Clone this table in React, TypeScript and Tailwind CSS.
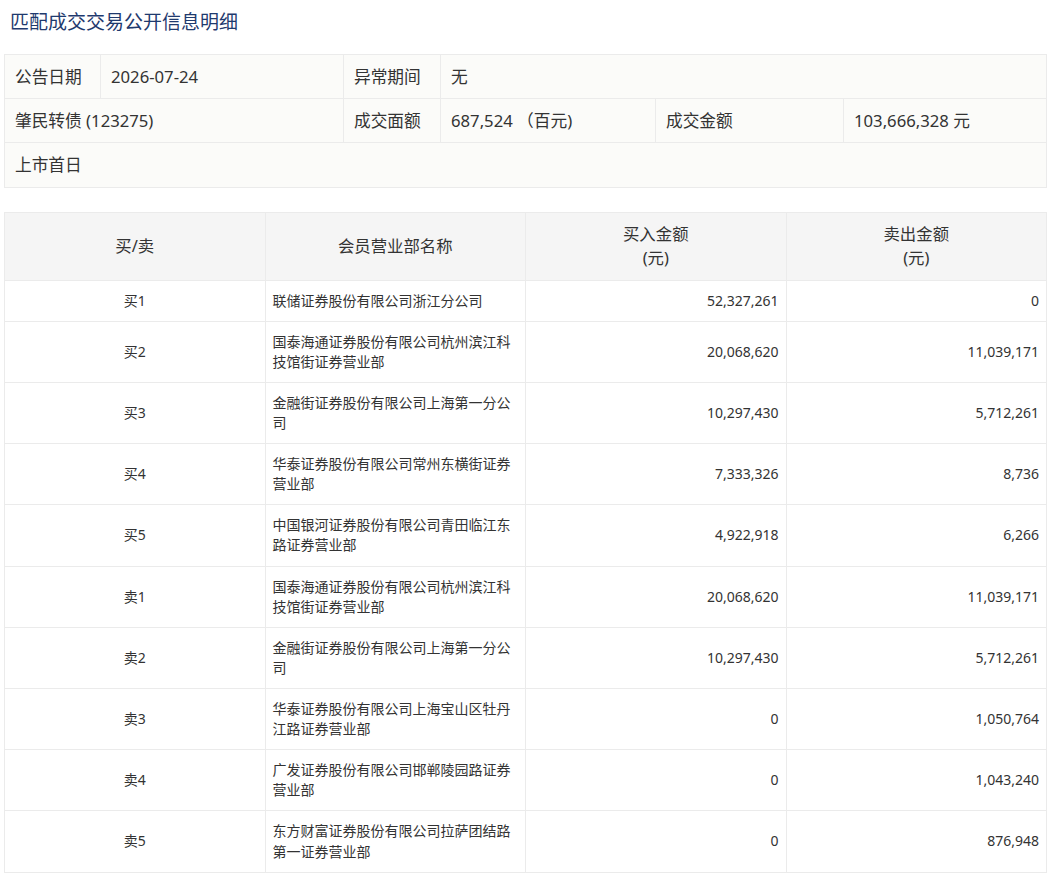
const font = { fontFamily: '"Noto Sans", "Noto Sans CJK SC", sans-serif' };

const rows = [
  { side: "买1", name: "联储证券股份有限公司浙江分公司", buy: "52,327,261", sell: "0" },
  { side: "买2", name: "国泰海通证券股份有限公司杭州滨江科技馆街证券营业部", buy: "20,068,620", sell: "11,039,171" },
  { side: "买3", name: "金融街证券股份有限公司上海第一分公司", buy: "10,297,430", sell: "5,712,261" },
  { side: "买4", name: "华泰证券股份有限公司常州东横街证券营业部", buy: "7,333,326", sell: "8,736" },
  { side: "买5", name: "中国银河证券股份有限公司青田临江东路证券营业部", buy: "4,922,918", sell: "6,266" },
  { side: "卖1", name: "国泰海通证券股份有限公司杭州滨江科技馆街证券营业部", buy: "20,068,620", sell: "11,039,171" },
  { side: "卖2", name: "金融街证券股份有限公司上海第一分公司", buy: "10,297,430", sell: "5,712,261" },
  { side: "卖3", name: "华泰证券股份有限公司上海宝山区牡丹江路证券营业部", buy: "0", sell: "1,050,764" },
  { side: "卖4", name: "广发证券股份有限公司邯郸陵园路证券营业部", buy: "0", sell: "1,043,240" },
  { side: "卖5", name: "东方财富证券股份有限公司拉萨团结路第一证券营业部", buy: "0", sell: "876,948" },
];

const info = "border border-[#ebebeb] px-[10px] h-[44.2px] text-[16.7px] leading-6 text-[#333]";
const th = "border border-[#ebebeb] font-normal text-[16.4px] leading-6 px-[7px]";
const td = "border border-[#ebebeb] px-[7px] py-[10px]";

export default function App() {
  return (
    <div className="bg-white pl-[4px] pr-[3px] pt-[10px] pb-[10px]" style={font}>
      <h1 className="ml-[6px] text-[19px] leading-6 text-[#1f3a6e] font-normal">匹配成交交易公开信息明细</h1>

      <table className="mt-[20px] w-full table-fixed border-collapse bg-[#fbfbf9]">
        <colgroup>
          <col className="w-[96px]" />
          <col className="w-[243px]" />
          <col className="w-[97px]" />
          <col className="w-[215px]" />
          <col className="w-[188px]" />
          <col />
        </colgroup>
        <tbody>
          <tr>
            <td className={info}>公告日期</td>
            <td className={info}>2026-07-24</td>
            <td className={info}>异常期间</td>
            <td className={info} colSpan={3}>无</td>
          </tr>
          <tr>
            <td className={info} colSpan={2}>肇民转债 (123275)</td>
            <td className={info}>成交面额</td>
            <td className={info}>687,524 （百元)</td>
            <td className={info}>成交金额</td>
            <td className={info}>103,666,328 元</td>
          </tr>
          <tr>
            <td className={info} colSpan={6}>上市首日</td>
          </tr>
        </tbody>
      </table>

      <table className="mt-[24px] w-full table-fixed border-collapse text-[#333]">
        <thead>
          <tr className="bg-[#f5f5f5] h-[68px]">
            <th className={th}>买/卖</th>
            <th className={th}>会员营业部名称</th>
            <th className={th}>
              买入金额
              <br />
              (元)
            </th>
            <th className={th}>
              卖出金额
              <br />
              (元)
            </th>
          </tr>
        </thead>
        <tbody>
          {rows.map((r) => (
            <tr key={r.side} className="text-[14px] leading-[20.11px]">
              <td className={`${td} text-center`}>{r.side}</td>
              <td className={`${td} text-left`}>{r.name}</td>
              <td className={`${td} text-right`}>{r.buy}</td>
              <td className={`${td} text-right`}>{r.sell}</td>
            </tr>
          ))}
        </tbody>
      </table>
    </div>
  );
}
